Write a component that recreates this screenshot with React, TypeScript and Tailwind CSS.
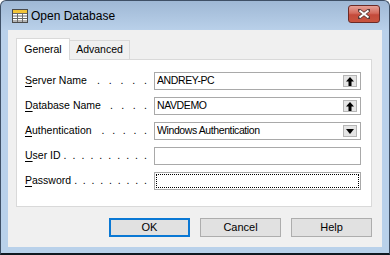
import React from "react";

const sans = "font-['Liberation_Sans',Arial,sans-serif]";

function Dots({ n, start }: { n: number; start: number }) {
  return (
    <span className="flex flex-1 justify-between pr-[7px]" style={{ paddingLeft: start }}>
      {Array.from({ length: n }).map((_, i) => (
        <span key={i}>.</span>
      ))}
    </span>
  );
}

function Label({ k, rest, dots, start }: { k: string; rest: string; dots: number; start: number }) {
  return (
    <div className="flex w-[129px] items-center text-[10.5px] text-black">
      <span className="whitespace-nowrap">
        <span className="underline underline-offset-[2px]">{k}</span>
        {rest}
      </span>
      <Dots n={dots} start={start} />
    </div>
  );
}

function ArrowUp() {
  return (
    <svg width="8" height="9" viewBox="0 0 8 9">
      <path d="M4 0 L8 4.5 L5.5 4.5 L5.5 9 L2.5 9 L2.5 4.5 L0 4.5 Z" fill="#000" />
    </svg>
  );
}

function ArrowDown() {
  return (
    <svg width="8" height="5" viewBox="0 0 8 5">
      <path d="M0 0 L8 0 L4 5 Z" fill="#000" />
    </svg>
  );
}

function Field({ value, btn, focus }: { value?: string; btn?: "up" | "down"; focus?: boolean }) {
  return (
    <div className="relative flex h-[18px] w-[207px] items-center border border-[#a9a9a9] bg-white pl-[2px]">
      {focus && <div className="absolute inset-[1px] border border-dotted border-black" />}
      <span className="flex-1 truncate text-[10.5px] tracking-[-0.4px] text-black">{value}</span>
      {btn && (
        <div className="mr-[3px] flex h-[12px] w-[14px] items-center justify-center border border-[#b5b5b5] bg-[#e5e5e5]">
          {btn === "up" ? <ArrowUp /> : <ArrowDown />}
        </div>
      )}
    </div>
  );
}

function Btn({ label, def }: { label: string; def?: boolean }) {
  return (
    <button
      className={
        "flex h-[19px] w-[81px] items-center justify-center bg-[#e1e1e1] text-[11px] text-black " +
        (def ? "border-2 border-[#0a78d4]" : "border border-[#adadad]")
      }
    >
      {label}
    </button>
  );
}

function DbIcon() {
  return (
    <svg width="16" height="14" viewBox="0 0 16 14">
      <rect x="0.5" y="0.5" width="15" height="13" fill="#fff" stroke="#4a4a4a" />
      <rect x="1" y="1" width="14" height="3" fill="#f3c436" />
      <path d="M1 4.5 H15 M1 7 H15 M1 9.5 H15 M1 12 H15 M5.5 4 V13 M10.5 4 V13" stroke="#6a6a6a" strokeWidth="1" />
    </svg>
  );
}

function CloseBtn() {
  return (
    <div className="flex h-[18px] w-[32px] items-center justify-center rounded-[3px] border border-[#6b2a26] bg-[linear-gradient(#e6a197,#d46a5c_45%,#c44a3b_55%,#c9543f)]">
      <svg width="12" height="10" viewBox="0 0 12 10">
        <path d="M1 1 L11 9 M11 1 L1 9" stroke="#5a3a38" strokeWidth="3.4" strokeLinecap="square" />
        <path d="M1.5 1.5 L10.5 8.5 M10.5 1.5 L1.5 8.5" stroke="#fff" strokeWidth="2" />
      </svg>
    </div>
  );
}

export default function App() {
  return (
    <div className={"h-[255px] w-[390px] bg-white " + sans}>
      <div className="flex h-full w-full flex-col rounded-t-[6px] border border-b-2 border-[#3f5066] border-b-[#101820] bg-[linear-gradient(#9fb8d5,#bad1ea_30px,#b9d1ea)] px-[7px] pb-[6px]">
        {/* title bar */}
        <div className="flex h-[29px] shrink-0 items-center">
          <div className="ml-[4px] mt-[1px]">
            <DbIcon />
          </div>
          <span className="ml-[3px] text-[12px] text-black">Open Database</span>
          <div className="ml-auto mr-[2px] mt-[-3px]">
            <CloseBtn />
          </div>
        </div>

        {/* client */}
        <div className="flex flex-1 flex-col bg-[#f0f0f0] pl-[8px] pr-[10px] pt-[8px]">
          <div className="flex h-[21px] items-end">
            <div className="relative z-10 -mb-px flex h-[22px] w-[54px] items-center justify-center border border-b-0 border-[#d9d9d9] bg-white text-[10.5px] text-black">
              General
            </div>
            <div className="flex h-[19px] w-[60px] items-center justify-center border border-b-0 border-l-0 border-[#d9d9d9] bg-[#f0f0f0] text-[10.5px] text-black">
              Advanced
            </div>
          </div>
          <div className="flex h-[148px] flex-col gap-[7px] border border-[#d9d9d9] bg-white pl-[8px] pt-[12px]">
            <div className="flex items-center">
              <Label k="S" rest="erver Name" dots={5} start={10} />
              <Field value="ANDREY-PC" btn="up" />
            </div>
            <div className="flex items-center">
              <Label k="D" rest="atabase Name" dots={4} start={9} />
              <Field value="NAVDEMO" btn="up" />
            </div>
            <div className="flex items-center">
              <Label k="A" rest="uthentication" dots={5} start={10} />
              <Field value="Windows Authentication" btn="down" />
            </div>
            <div className="flex items-center">
              <Label k="U" rest="ser ID" dots={10} start={3} />
              <Field />
            </div>
            <div className="flex items-center">
              <Label k="P" rest="assword" dots={9} start={3} />
              <Field focus />
            </div>
          </div>
          <div className="mt-[11px] flex justify-end gap-[10px] pr-[-1px]">
            <Btn label="OK" def />
            <Btn label="Cancel" />
            <Btn label="Help" />
          </div>
        </div>
      </div>
    </div>
  );
}
